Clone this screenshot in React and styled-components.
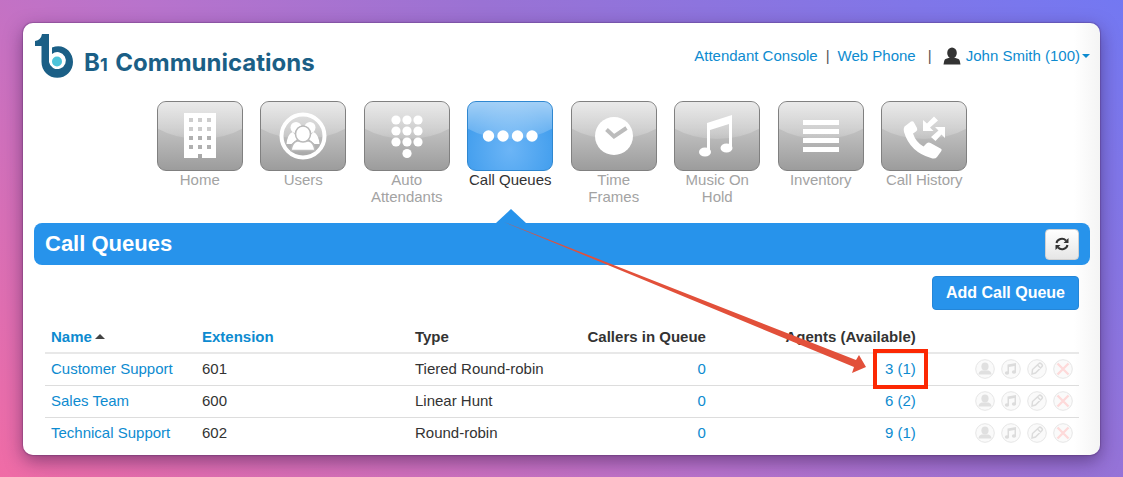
import React from "react";
import styled, { createGlobalStyle, css } from "styled-components";

const GlobalStyle = createGlobalStyle`
  * { box-sizing: border-box; }
  body {
    margin: 0;
    font-family: "Liberation Sans", Helvetica, Arial, sans-serif;
    font-size: 15px;
    line-height: 18px;
    color: #333;
  }
`;

const blue = "#2793eb";
const linkBlue = "#0d8bd0";

const Page = styled.div`
  min-height: 100vh;
  padding: 23px 23px 22px;
  display: flex;
  flex-direction: column;
  background: linear-gradient(40deg, #f06ca6 0%, #b873cc 42%, #9a72d4 62%, #7378f2 100%);
`;

const Card = styled.main`
  flex: 1;
  padding: 11px 10px 2px 11px;
  border-radius: 10px;
  background: linear-gradient(to left, #f4f4f4, #fff 26px);
  box-shadow: 0 0 1px 1px rgba(80, 40, 100, 0.3), 0 6px 18px rgba(50, 20, 70, 0.5);
`;

const Header = styled.header`
  display: flex;
  justify-content: space-between;
  align-items: flex-start;
`;

const Brand = styled.a`
  display: flex;
  align-items: flex-start;
  gap: 10px;
  padding-left: 1px;
  color: #1b5f86;
  text-decoration: none;
`;

const BrandName = styled.span`
  padding-top: 14px;
  font: 700 24px/30px Inter, sans-serif;
`;

const BrandDigit = styled.span`
  margin-right: 2px;
  font-size: 18px;
`;

const Account = styled.nav`
  display: flex;
  align-items: center;
  gap: 8px;
  padding-top: 13px;
`;

const Divider = styled.span`
  color: #555;
`;

const Link = styled.a`
  color: ${linkBlue};
  text-decoration: none;
`;

const UserButton = styled.button`
  display: flex;
  align-items: center;
  gap: 5px;
  margin-left: 3px;
  padding: 0;
  border: 0;
  background: none;
  font: inherit;
  color: ${linkBlue};
`;

const Caret = styled.span`
  display: inline-block;
  ${(p) =>
    p.$up
      ? css`
          margin: 0 0 3px 3px;
          border: 5px solid transparent;
          border-top: 0;
          border-bottom-color: #444;
        `
      : css`
          margin-left: -3px;
          border: 4px solid transparent;
          border-bottom: 0;
          border-top-color: ${linkBlue};
        `}
`;

const Tiles = styled.nav`
  display: grid;
  grid-template-columns: repeat(8, 1fr);
  max-width: 828px;
  margin: 21px auto 0;
`;

const Tile = styled.a`
  display: flex;
  flex-direction: column;
  align-items: center;
  min-height: 122px;
  line-height: 17px;
  text-align: center;
  text-decoration: none;
  color: ${(p) => (p.$active ? "#333" : "#a3a3a3")};
`;

const TileFace = styled.span`
  position: relative;
  display: block;
  width: 86px;
  height: 70px;
  overflow: hidden;
  border-radius: 9px;
  border: 1px solid ${(p) => (p.$active ? "#2f87d0" : "#808080")};
  background: ${(p) =>
    p.$active
      ? "radial-gradient(ellipse at 50% 70%, #6cb5f6, #449fee 75%)"
      : "linear-gradient(#c8c8c8, #bebebe 45%, #9c9c9c)"};

  &::before {
    content: "";
    position: absolute;
    left: -20px;
    right: -20px;
    top: -40px;
    height: 77px;
    border-radius: 50%;
    background: linear-gradient(rgba(255, 255, 255, 0.7) 50%, rgba(255, 255, 255, 0.15));
    opacity: ${(p) => (p.$active ? 0.75 : 0.9)};
  }

  svg { position: absolute; left: 0; top: 0; }
`;

const TileLabel = styled.span`
  max-width: 84px;
`;

const TitleBar = styled.section`
  position: relative;
  display: flex;
  align-items: center;
  justify-content: space-between;
  height: 42px;
  padding: 0 11px;
  border-radius: 8px;
  background: ${blue};

  &::before {
    content: "";
    position: absolute;
    left: calc(50% - 66px);
    top: -14px;
    border: 15px solid transparent;
    border-top: 0;
    border-bottom: 14px solid ${blue};
  }
`;

const Title = styled.h1`
  margin: 0;
  font-size: 22px;
  line-height: 28px;
  color: #fff;
`;

const RefreshButton = styled.button`
  display: flex;
  align-items: center;
  justify-content: center;
  width: 34px;
  height: 31px;
  padding: 0;
  border: 1px solid #d0d0d0;
  border-radius: 4px;
  background: linear-gradient(#fff, #e6e6e6);
`;

const Actions = styled.div`
  display: flex;
  justify-content: flex-end;
  padding: 11px 11px 0;
`;

const PrimaryButton = styled.button`
  height: 34px;
  padding: 0 13px;
  border: 1px solid #2486d8;
  border-radius: 4px;
  background: ${blue};
  font: 700 16px/20px "Liberation Sans", Arial, sans-serif;
  color: #fff;
`;

const TableWrap = styled.div`
  padding: 11px 11px 0;
`;

const Table = styled.table`
  width: 100%;
  table-layout: fixed;
  border-collapse: collapse;
`;

const Row = styled.tr`
  & + & { border-top: 1px solid #ddd; }
`;

const cell = css`
  height: 32px;
  padding: 0 6px;
  text-align: ${(p) => (p.$right ? "right" : "left")};
  white-space: nowrap;
`;

const Th = styled.th`
  ${cell}
  width: ${(p) => p.$width};
  border-bottom: 2px solid #e8e8e8;
`;

const Td = styled.td`
  ${cell}
`;

const RowActions = styled.div`
  display: flex;
  justify-content: flex-end;
  gap: 6px;
`;

const IconButton = styled.button`
  display: block;
  width: 20px;
  height: 20px;
  padding: 0;
  border: 0;
  background: none;
`;

const Highlight = styled.span`
  position: relative;

  &::before {
    content: "";
    position: absolute;
    inset: -11px -12px -12px;
    border: 4px solid #fc2803;
  }
`;

const Pointer = styled.svg`
  position: absolute;
  right: 50px;
  bottom: 4px;
  pointer-events: none;
`;

const Logo = () => (
  <svg width="39" height="44" viewBox="0 0 39 44" aria-hidden="true">
    <path fill="#1b5f86" d="M7 0H14V28A8.500 8.500 0 1 0 17 20V13.500C28 9 38 17 38 28A15.500 15.500 0 0 1 6.500 28V12H0V7Q6 6 7 0Z" />
    <circle cx="22" cy="27.500" r="5" fill="#4cc3d9" />
  </svg>
);

const tileArt = {
  home: (
    <>
      <path fill="#fff" d="M26 11h32v45H44v-4h-4v4H26z" />
      {[16, 25, 34, 43].map((y) =>
        [31, 40, 49].map((x) => <rect key={x + "-" + y} x={x} y={y} width="4" height="4" fill={y > 30 ? "#b0b0b0" : "#cdcdcd"} />)
      )}
    </>
  ),
  users: (
    <>
      <circle cx="42" cy="34" r="21.500" fill="none" stroke="#fff" strokeWidth="4" />
      <g fill="#fff">
        <circle cx="35" cy="25.500" r="5.500" />
        <circle cx="49" cy="25.500" r="5.500" />
        <path d="M25.500 42q1-10 6-12l6 6-7 6zM58.500 42q-1-10-6-12l-6 6 7 6z" />
      </g>
      <g fill="#fff" stroke="#bababa" strokeWidth="1.500">
        <path d="M30 48.500q1-8 6-9.500h12q5 1.500 6 9.500z" />
        <ellipse cx="42" cy="32" rx="7.500" ry="8" />
      </g>
    </>
  ),
  keypad: (
    <g fill="#fff">
      {[18, 29, 40].map((y) => [31, 42, 53].map((x) => <circle key={x + "-" + y} cx={x} cy={y} r="4.600" />))}
      <circle cx="42" cy="51.500" r="4.600" />
    </g>
  ),
  queue: (
    <g fill="#fff">
      {[20.500, 35, 49.500, 64].map((x) => <circle key={x} cx={x} cy="34" r="5.700" />)}
    </g>
  ),
  clock: (
    <>
      <circle cx="42" cy="34" r="19" fill="#fff" />
      <path d="M34.500 27.500 42 34.500 54.500 26" fill="none" stroke="#bcbcbc" strokeWidth="4" />
    </>
  ),
  music: (
    <>
      <path fill="#fff" d="M32 21 57 13V46h-3V22l-19 6V50h-3z" />
      <ellipse cx="30" cy="50" rx="6" ry="4.500" fill="#fff" />
      <ellipse cx="51.500" cy="46" rx="6" ry="4.500" fill="#fff" />
    </>
  ),
  list: (
    <g fill="#fff">
      {[18, 27, 36, 45].map((y) => <rect key={y} x="24" y={y} width="36" height="5" />)}
    </g>
  ),
  calls: (
    <g fill="#fff">
      <path d="M22.500 24.500 29 19.500q2-1 3 1l3 5.500q1 2-1 3.500l-3 2q3 9 10.500 13l3-3q2-1.500 4-.5l10 5.500q2 1 .5 3l-4 5.500q-2 2.500-6 1Q28 50 22 30q-1-3 .5-5.500z" />
      <path d="m52 14.500 4 4-8 7 3.500 3.500H41V18l4 3.500z" />
      <path d="m53.500 39-4.500-4 7.500-6.500L53 25h10v11l-3.500-3.500z" />
    </g>
  ),
};

const tiles = [
  ["Home", "home"],
  ["Users", "users"],
  ["Auto Attendants", "keypad"],
  ["Call Queues", "queue"],
  ["Time Frames", "clock"],
  ["Music On Hold", "music"],
  ["Inventory", "list"],
  ["Call History", "calls"],
];

const rowArt = {
  "Agents": (
    <g fill="#e0e0e0">
      <ellipse cx="10" cy="7.500" rx="3.600" ry="4" />
      <path d="M3.500 15.500q0-3 3-4h7q3 1 3 4z" />
    </g>
  ),
  "Music": (
    <g fill="#dcdcdc">
      <path d="M6.500 5.500 15 4v9h-1.500V7L8 8v6H6.500z" />
      <ellipse cx="6" cy="14" rx="2.200" ry="1.700" />
      <ellipse cx="13" cy="13" rx="2.200" ry="1.700" />
    </g>
  ),
  "Edit": <path fill="none" stroke="#dcdcdc" strokeWidth="1.500" d="m5 15 .5-4.500 6.500-6q1-1 2.500.5t.5 2.500L8.500 14zM10.500 6l3.500 3.500" />,
  "Delete": <path stroke="#fddada" strokeWidth="2.400" d="m4.500 4.500 11 11M15.500 4.500l-11 11" />,
};

const queues = [
  { name: "Customer Support", ext: "601", type: "Tiered Round-robin", callers: 0, agents: "3 (1)", marked: true },
  { name: "Sales Team", ext: "600", type: "Linear Hunt", callers: 0, agents: "6 (2)" },
  { name: "Technical Support", ext: "602", type: "Round-robin", callers: 0, agents: "9 (1)" },
];

export default function App() {
  return (
    <Page>
      <GlobalStyle />
      <Card>
        <Header>
          <Brand href="#">
            <Logo />
            <BrandName>B<BrandDigit>1</BrandDigit> Communications</BrandName>
          </Brand>
          <Account aria-label="Account">
            <Link href="#">Attendant Console</Link>
            <Divider>|</Divider>
            <Link href="#">Web Phone</Link>
            <Divider>&nbsp;|</Divider>
            <UserButton type="button">
              <svg width="18" height="18" viewBox="0 0 18 18" aria-hidden="true">
                <ellipse cx="9" cy="6" rx="4.800" ry="5.500" fill="#333" />
                <path fill="#333" d="M5.500 11h7l3 1q1 .5 1.300 2l.7 3.500H.5L1.200 14q.3-1.500 1.300-2z" />
              </svg>
              John Smith (100)
              <Caret />
            </UserButton>
          </Account>
        </Header>

        <Tiles aria-label="Main">
          {tiles.map(([label, art]) => {
            const active = art === "queue";
            return (
              <Tile href="#" key={art} $active={active}>
                <TileFace $active={active}>
                  <svg width="84" height="68" viewBox="0 0 84 68" aria-hidden="true">{tileArt[art]}</svg>
                </TileFace>
                <TileLabel>{label}</TileLabel>
              </Tile>
            );
          })}
        </Tiles>

        <TitleBar>
          <Title>Call Queues</Title>
          <RefreshButton type="button" aria-label="Refresh">
            <svg width="14" height="14" viewBox="0 0 14 14" aria-hidden="true">
              <path fill="none" stroke="#333" strokeWidth="2" d="M1.500 6A5.500 5 0 0 1 11 3.500M12.500 8A5.500 5 0 0 1 3 10.500" />
              <path fill="#333" d="M13.500 1v5h-5zM.5 13V8h5z" />
            </svg>
          </RefreshButton>
        </TitleBar>

        <Actions>
          <PrimaryButton type="button">Add Call Queue</PrimaryButton>
        </Actions>

        <TableWrap>
          <Table>
            <thead>
              <tr>
                <Th $width="14.6%"><Link href="#">Name</Link><Caret $up /></Th>
                <Th $width="20.6%"><Link href="#">Extension</Link></Th>
                <Th $width="15.4%">Type</Th>
                <Th $width="13.9%" $right>Callers in Queue</Th>
                <Th $width="20.3%" $right>Agents (Available)</Th>
                <Th as="td" $width="15.2%" />
              </tr>
            </thead>
            <tbody>
              {queues.map((q) => (
                <Row key={q.ext}>
                  <Td><Link href="#">{q.name}</Link></Td>
                  <Td>{q.ext}</Td>
                  <Td>{q.type}</Td>
                  <Td $right><Link href="#">{q.callers}</Link></Td>
                  <Td $right>
                    {q.marked ? (
                      <Highlight>
                        <Link href="#">{q.agents}</Link>
                        <Pointer width="366" height="154" viewBox="0 0 366 154" aria-hidden="true">
                          <path fill="#e2503a" d="M4 3 356 141 359 136 366 148 352 154 354 148Z" />
                        </Pointer>
                      </Highlight>
                    ) : (
                      <Link href="#">{q.agents}</Link>
                    )}
                  </Td>
                  <Td>
                    <RowActions>
                      {Object.entries(rowArt).map(([label, art]) => (
                        <IconButton type="button" key={label} aria-label={label + ": " + q.name}>
                          <svg width="20" height="20" viewBox="0 0 20 20" aria-hidden="true">
                            <circle cx="10" cy="10" r="9.300" fill="#fafafa" stroke="#e6e6e6" />
                            {art}
                          </svg>
                        </IconButton>
                      ))}
                    </RowActions>
                  </Td>
                </Row>
              ))}
            </tbody>
          </Table>
        </TableWrap>
      </Card>
    </Page>
  );
}
